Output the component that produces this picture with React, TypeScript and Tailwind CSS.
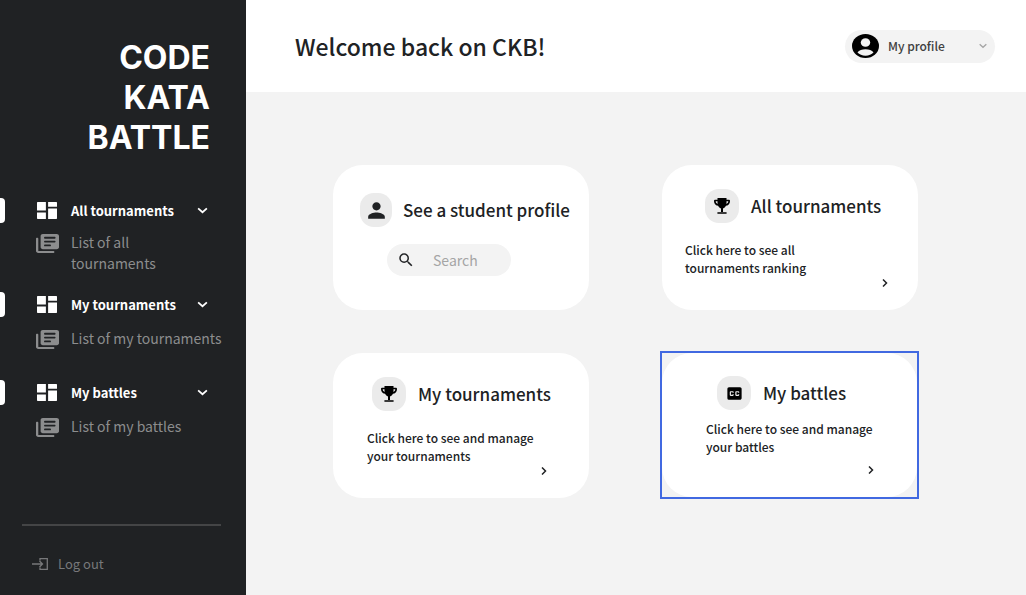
import type { ReactNode } from "react";
import { MdClosedCaption, MdPerson, MdSearch } from "react-icons/md";

function DashboardIcon() {
  return (
    <svg viewBox="3 3 18 18" preserveAspectRatio="none" className="h-[17px] w-5 shrink-0 fill-white" aria-hidden="true">
      <path d="M3.5 3H11v9H3V3.5zM3 14h8v7H3.6L3 20.4zM13 21h7.5l.5-.5V10h-8zM13 3v5h8V3.5l-.5-.5z" />
    </svg>
  );
}

function LibraryIcon() {
  return (
    <svg viewBox="2 2 20 20" preserveAspectRatio="none" className="mt-[2px] h-[19px] w-[23px] shrink-0 fill-[#8c8d8e]" aria-hidden="true">
      <path d="M3 6c-.6 0-1 .4-1 1v13c0 1.1.9 2 2 2h13c.6 0 1-.4 1-1s-.4-1-1-1H4V7c0-.6-.4-1-1-1zm17-4H8c-1.1 0-2 .9-2 2v12c0 1.1.9 2 2 2h12c1.1 0 2-.9 2-2V4c0-1.1-.9-2-2-2zm-2 9h-8c-.6 0-1-.4-1-1s.4-1 1-1h8c.6 0 1 .4 1 1s-.4 1-1 1zm-4 4h-4c-.6 0-1-.4-1-1s.4-1 1-1h4c.6 0 1 .4 1 1s-.4 1-1 1zm4-8h-8c-.6 0-1-.4-1-1s.4-1 1-1h8c.6 0 1 .4 1 1s-.4 1-1 1z" />
    </svg>
  );
}

function AccountIcon() {
  return (
    <svg viewBox="0 0 27 24" className="ml-[2px] h-6 w-[27px]" aria-hidden="true">
      <ellipse cx="13.500" cy="12" rx="13.500" ry="12" fill="#000" />
      <ellipse cx="13.500" cy="8.500" rx="4.700" ry="4.300" fill="#f3f3f3" />
      <path d="M5.500 18.500c1.500-2 4.600-3.200 8-3.200s6.500 1.200 8 3.200c-1.800 2-4.700 3.200-8 3.200s-6.200-1.200-8-3.200z" fill="#f3f3f3" />
    </svg>
  );
}

function TrophyIcon() {
  return (
    <svg viewBox="0 0 16 16" className="size-4" aria-hidden="true">
      <path d="M3.500 0h9v5c0 3-1.500 4.700-3.500 5.400V14h-2v-3.600C5 9.700 3.500 8 3.500 5z" />
      <path d="M4 15h8" fill="none" stroke="currentColor" strokeWidth="1.600" strokeLinecap="round" />
      <path d="M4 2.500H.9C.6 5 2 6.800 4.800 7M12 2.500h3.100C15.400 5 14 6.800 11.200 7" fill="none" stroke="currentColor" strokeWidth="1.700" strokeLinejoin="round" />
    </svg>
  );
}

function ChevronDown({ className }: { className: string }) {
  return (
    <svg viewBox="0 0 12 8" className={className} fill="none" stroke="currentColor" strokeWidth="2" aria-hidden="true">
      <path d="M1 1.500L6 6L11 1.500" />
    </svg>
  );
}

function ChevronRight() {
  return (
    <svg viewBox="0 0 6 8" className="mt-[2px] h-2 w-[6px] self-end" fill="none" stroke="#202224" strokeWidth="1.500" aria-hidden="true">
      <path d="M1 .5L4.500 4L1 7.500" />
    </svg>
  );
}

interface NavSectionProps {
  title: string;
  item: string;
  className: string;
  itemClass: string;
}

function NavSection({ title, item, className, itemClass }: NavSectionProps) {
  return (
    <li className={className}>
      <button type="button" className="flex h-6 w-full items-center text-left text-[13px] font-bold text-white">
        <span className="h-[25px] w-[5px] rounded-r bg-white" />
        <span className="ml-8 flex w-[34px]">
          <DashboardIcon />
        </span>
        <span className="flex-1 pt-[2px] whitespace-nowrap">{title}</span>
        <ChevronDown className="mr-[38px] h-[7px] w-[11px]" />
      </button>
      <a href="#list" className={`ml-9 flex gap-3 text-sm leading-[21px] text-[#8c8d8e] ${itemClass}`}>
        <LibraryIcon />
        <span>{item}</span>
      </a>
    </li>
  );
}

function IconBox({ children, className }: { children: ReactNode; className: string }) {
  return (
    <span className={`flex h-[34px] shrink-0 items-center justify-center rounded-[14px] bg-[#ebebeb] text-black ${className}`}>
      {children}
    </span>
  );
}

interface LinkCardProps {
  title: string;
  text: string;
  icon: ReactNode;
  className: string;
  headClass: string;
  textClass: string;
}

function LinkCard({ title, text, icon, className, headClass, textClass }: LinkCardProps) {
  return (
    <a href="#open" className={`flex flex-col rounded-[30px] bg-white ${className}`}>
      <span className={`flex items-center gap-3 ${headClass}`}>
        <IconBox className="w-[34px]">{icon}</IconBox>
        <h2 className="text-[17px] leading-6 font-medium whitespace-nowrap">{title}</h2>
      </span>
      <span className={`text-xs leading-[18px] font-medium ${textClass}`}>{text}</span>
      <ChevronRight />
    </a>
  );
}

export default function App() {
  return (
    <div className="flex min-h-screen bg-[#f3f3f3] font-['Noto_Sans_CJK_SC',sans-serif] text-[#202224]">
      <aside className="flex w-[246px] shrink-0 flex-col bg-[#202224]">
        <div className="pt-[38px] pr-9 text-right font-['Inter',sans-serif] text-[32px] leading-10 font-bold text-white">
          CODE
          <br />
          KATA
          <br />
          BATTLE
        </div>
        <nav>
          <ul>
            <NavSection title="All tournaments" item="List of all tournaments" className="mt-10" itemClass="mt-[10px] pr-[60px]" />
            <NavSection title="My tournaments" item="List of my tournaments" className="mt-[18px]" itemClass="mt-3 pr-5" />
            <NavSection title="My battles" item="List of my battles" className="mt-[31px]" itemClass="mt-3 pr-5" />
          </ul>
        </nav>
        <div className="mt-auto mr-[25px] ml-[22px] border-t-2 border-[#444546] pt-7 pb-[21px]">
          <a href="#logout" className="ml-[10px] flex h-5 items-center gap-[10px] text-[13px] leading-5 text-[#77787a]">
            <svg viewBox="0 0 16 12" className="h-3 w-4" fill="none" stroke="currentColor" strokeWidth="1.300" aria-hidden="true">
              <path d="M0 6h10.500M7.500 3l3 3l-3 3M8 2.500V.7h7.300v10.600H8V9.500" />
            </svg>
            Log out
          </a>
        </div>
      </aside>

      <div className="flex min-w-0 flex-1 flex-col">
        <header className="flex h-[92px] items-center justify-between bg-white pr-[31px] pl-[49px]">
          <h1 className="text-[23px] leading-8 font-medium">Welcome back on CKB!</h1>
          <button type="button" className="flex h-[33px] w-[150px] items-center rounded-full bg-[#f3f3f3] pr-2 pl-[5px] text-xs font-medium text-[#404040]">
            <AccountIcon />
            <span className="ml-[9px] flex-1 text-left">My profile</span>
            <ChevronDown className="h-[6px] w-2 text-[#a5a5a5]" />
          </button>
        </header>

        <main className="grid grid-cols-2 gap-x-[73px] gap-y-[43px] pt-[73px] pr-[108px] pl-[87px]">
          <section className="flex min-h-[145px] flex-col rounded-[30px] bg-white pt-7">
            <div className="flex items-center gap-[11px] pl-[27px]">
              <IconBox className="w-8">
                <MdPerson className="size-[25px] text-[#202224]" />
              </IconBox>
              <label htmlFor="student" className="text-[17px] leading-6 font-medium whitespace-nowrap">
                See a student profile
              </label>
            </div>
            <div className="mt-[17px] ml-[54px] flex h-8 w-[124px] items-center gap-[18px] rounded-full bg-[#f3f3f3] pl-[10px]">
              <MdSearch className="size-[18px] shrink-0" />
              <input
                id="student"
                type="search"
                placeholder="Search"
                className="w-full min-w-0 bg-transparent pr-3 text-sm outline-none placeholder:text-[#a5a5a5]"
              />
            </div>
          </section>
          <LinkCard
            title="All tournaments"
            text="Click here to see all tournaments ranking"
            icon={<TrophyIcon />}
            className="min-h-[145px] pt-6 pr-[30px]"
            headClass="pl-[43px]"
            textClass="mt-[18px] max-w-[180px] pl-[23px]"
          />
          <LinkCard
            title="My tournaments"
            text="Click here to see and manage your tournaments"
            icon={<TrophyIcon />}
            className="min-h-[145px] pt-6 pr-[42px]"
            headClass="pl-[39px]"
            textClass="mt-[18px] pl-[34px]"
          />
          <div className="mr-px mb-px outline-2 outline-[#4169e1]">
            <LinkCard
              title="My battles"
              text="Click here to see and manage your battles"
              icon={<MdClosedCaption className="size-[19px]" />}
              className="min-h-[144px] pt-[23px] pr-[43px]"
              headClass="pl-[55px]"
              textClass="mt-[10px] mb-2 pl-11"
            />
          </div>
        </main>
      </div>
    </div>
  );
}
